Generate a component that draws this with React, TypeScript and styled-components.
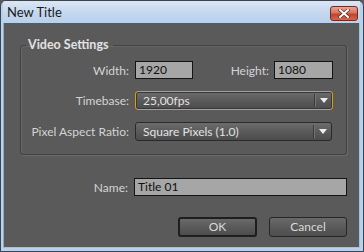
import styled, { createGlobalStyle } from "styled-components";

const GlobalStyle = createGlobalStyle`
  html, body {
    margin: 0;
    padding: 0;
    background: #5a5a5a;
  }
  * {
    box-sizing: border-box;
  }
`;

const Window = styled.div`
  width: 364px;
  height: 252px;
  display: flex;
  flex-direction: column;
  border: 1px solid #3c4450;
  border-radius: 6px 6px 0 0;
  background: #b9d1ea;
  padding: 0 3px 3px 2px;
  font-family: Lato, "Open Sans", "Liberation Sans", sans-serif;
  overflow: hidden;
`;

const TitleBar = styled.div`
  height: 22px;
  flex: none;
  display: flex;
  align-items: center;
  justify-content: space-between;
  padding: 0 2px 0 4px;
  background: linear-gradient(#dae6f4, #c2d6ee 60%, #b9d1ea);
`;

const TitleText = styled.span`
  font-size: 13px;
  color: #1a1a1a;
  padding-bottom: 1px;
`;

const CloseButton = styled.div`
  width: 28px;
  height: 15px;
  margin-top: 2px;
  border: 1px solid #6e2c24;
  border-radius: 3px;
  background: linear-gradient(#e8a595, #d8755f 45%, #c2432c 55%, #d0684f);
  display: flex;
  align-items: center;
  justify-content: center;
`;

const Client = styled.div`
  flex: 1;
  background: #5a5a5a;
  border-left: 1px solid #8ea8c6;
  border-bottom: 1px solid #8ccbe6;
  border-right: 1px solid #8ccbe6;
  padding: 15px 0 0 16px;
  display: flex;
  flex-direction: column;
`;

const Group = styled.fieldset`
  margin: 0;
  width: 327px;
  padding: 9px 0 13px 2px;
  border: 1px solid #424242;
  border-radius: 3px;
  box-shadow: 1px 1px 0 #6a6a6a, inset 1px 1px 0 #666;
  min-width: 0;
`;

const Legend = styled.legend`
  margin-left: 3px;
  padding: 0 4px 0 2px;
  font-size: 12.5px;
  line-height: 14px;
  font-weight: bold;
  color: #e2e2e2;
`;

const Form = styled.div`
  display: grid;
  grid-template-columns: 106px 198px;
  column-gap: 6px;
  row-gap: 12px;
  align-items: center;
`;

const Label = styled.label`
  font-size: 12px;
  color: #d4d4d4;
  text-align: right;
  white-space: nowrap;
`;

const SizeRow = styled.div`
  display: flex;
  align-items: center;
  gap: 5px;
`;

const TextInput = styled.div<{ $width: number }>`
  width: ${(p) => p.$width}px;
  height: 18px;
  border: 1px solid #141414;
  background: #a6a6a6;
  color: #101010;
  font-size: 12px;
  line-height: 16px;
  padding-left: 3px;
  flex: none;
`;

const Spacer = styled(Label)`
  flex: 1;
`;

const Select = styled.div<{ $focused?: boolean; $width: number }>`
  width: ${(p) => p.$width}px;
  height: 19px;
  display: flex;
  align-items: stretch;
  border: 1px solid ${(p) => (p.$focused ? "#dc9e0a" : "#2a2a2a")};
  box-shadow: ${(p) => (p.$focused ? "inset 0 0 0 1px #383838" : "none")};
  border-radius: 3px;
  background: linear-gradient(#6c6c6c, #5a5a5a 50%, #4c4c4c);
  color: #e2e2e2;
  font-size: 12px;
`;

const SelectValue = styled.span`
  flex: 1;
  padding-left: 7px;
  line-height: 17px;
`;

const SelectArrow = styled.span`
  width: 18px;
  margin: 2px 0;
  border-left: 1px solid #3a3a3a;
  box-shadow: inset 1px 0 0 #747474;
  display: flex;
  align-items: center;
  justify-content: center;
`;

const NameRow = styled.div`
  display: grid;
  grid-template-columns: 106px 213px;
  column-gap: 6px;
  align-items: center;
  margin-top: 23px;
  padding-left: 2px;
`;

const Buttons = styled.div`
  display: flex;
  gap: 12px;
  margin-top: 21px;
  padding-left: 158px;
`;

const Button = styled.div<{ $default?: boolean; $width: number }>`
  width: ${(p) => p.$width}px;
  height: 20px;
  border: ${(p) => (p.$default ? "2px solid #1e1e1e" : "1px solid #262626")};
  border-radius: 3px;
  background: linear-gradient(#6a6a6a, #5a5a5a 50%, #4d4d4d);
  color: #dadada;
  font-size: 12px;
  display: flex;
  align-items: center;
  justify-content: center;
  padding-bottom: 1px;
`;

const Arrow = () => (
  <svg width="8" height="5" viewBox="0 0 8 5">
    <path d="M0 0H8L4 5Z" fill="#eeeeee" />
  </svg>
);

const CloseIcon = () => (
  <svg width="12" height="9" viewBox="0 0 12 9">
    <path
      d="M2 1L10 8M10 1L2 8"
      stroke="#5a2a22"
      strokeWidth="3.2"
      strokeLinecap="square"
    />
    <path
      d="M2 1L10 8M10 1L2 8"
      stroke="#ffffff"
      strokeWidth="2"
      strokeLinecap="square"
    />
  </svg>
);

export default function App() {
  return (
    <>
      <GlobalStyle />
      <Window>
        <TitleBar>
          <TitleText>New Title</TitleText>
          <CloseButton>
            <CloseIcon />
          </CloseButton>
        </TitleBar>
        <Client>
          <Group>
            <Legend>Video Settings</Legend>
            <Form>
              <Label>Width:</Label>
              <SizeRow>
                <TextInput $width={58}>1920</TextInput>
                <Spacer>Height:</Spacer>
                <TextInput $width={59}>1080</TextInput>
              </SizeRow>
              <Label>Timebase:</Label>
              <Select $focused $width={198}>
                <SelectValue>25,00fps</SelectValue>
                <SelectArrow>
                  <Arrow />
                </SelectArrow>
              </Select>
              <Label>Pixel Aspect Ratio:</Label>
              <Select $width={197}>
                <SelectValue>Square Pixels (1.0)</SelectValue>
                <SelectArrow>
                  <Arrow />
                </SelectArrow>
              </Select>
            </Form>
          </Group>
          <NameRow>
            <Label>Name:</Label>
            <TextInput $width={213}>Title 01</TextInput>
          </NameRow>
          <Buttons>
            <Button $default $width={79}>
              OK
            </Button>
            <Button $width={78}>Cancel</Button>
          </Buttons>
        </Client>
      </Window>
    </>
  );
}
